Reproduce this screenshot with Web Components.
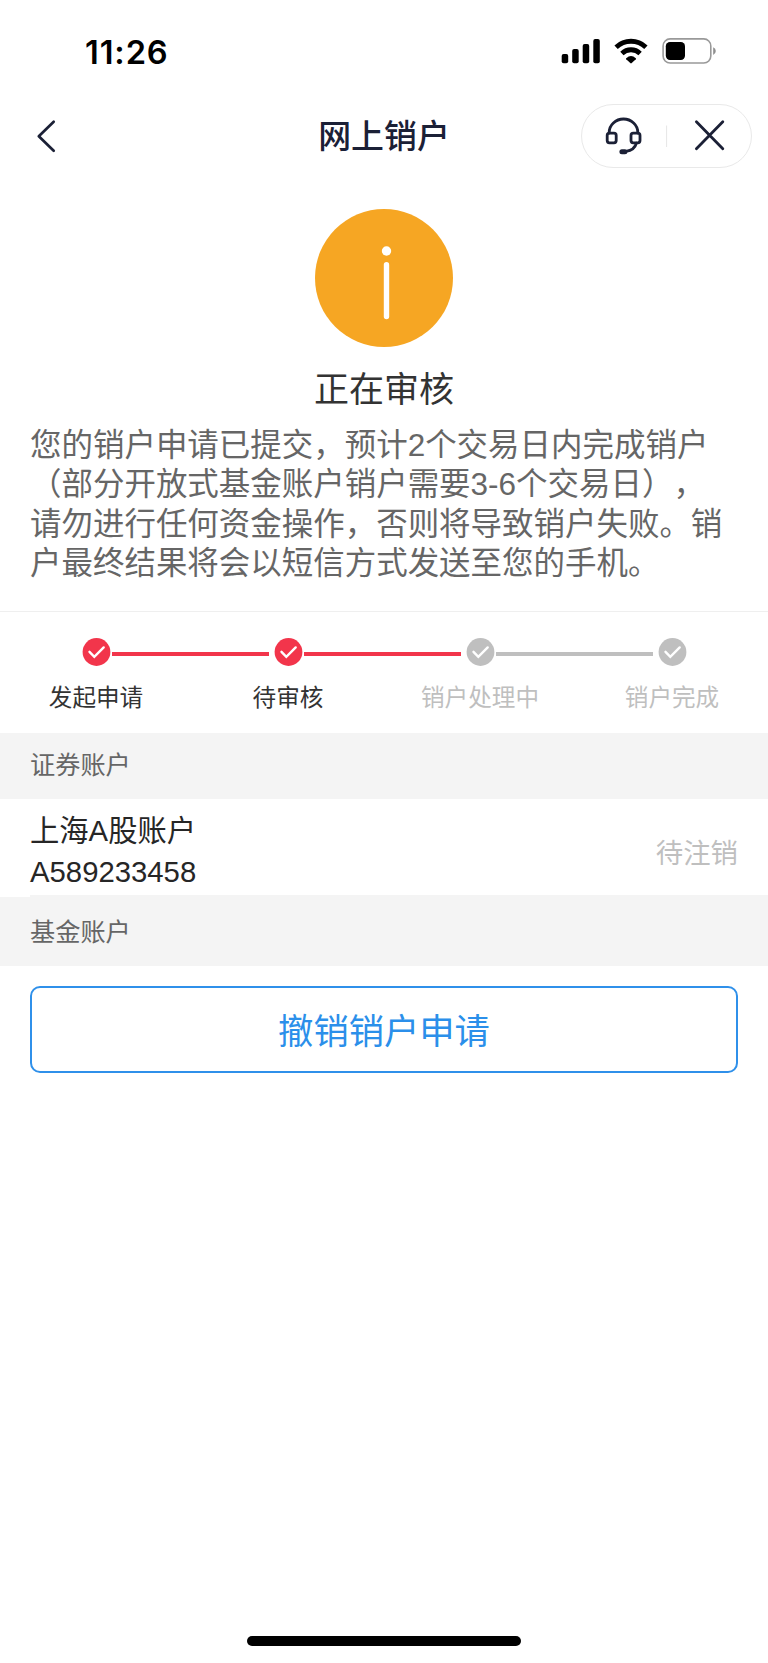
<!DOCTYPE html>
<html lang="zh-CN">
<head>
<meta charset="utf-8">
<title>网上销户</title>
<style>
html,body{margin:0;padding:0;background:#fff}
body{font-family:"Liberation Sans","Noto Sans CJK SC",sans-serif;color:#333;width:768px;height:1663px;overflow:hidden;text-spacing-trim:space-all}
</style>
</head>
<body>
<closing-page></closing-page>
<script>
const define=(name,html)=>customElements.define(name,class extends HTMLElement{
  constructor(){
    super();
    const t=document.createElement('template');
    t.innerHTML='<style>*{box-sizing:border-box}svg{display:block}</style>'+html;
    this.attachShadow({mode:'open'}).append(t.content.cloneNode(true));
  }
});

define('status-bar',`<style>
:host{box-sizing:border-box;display:flex;height:104px;padding:33px 52px 0 85px;justify-content:space-between;align-items:flex-start;color:#000}
.time{font:600 32.6px/38px Inter,sans-serif;letter-spacing:.9px}
svg{margin-top:3px}
</style>
<div class="time">11:26</div>
<svg width="156" height="30" viewBox="560 36 156 30">
<rect x="561.7" y="54" width="6.5" height="9.2" rx="1.9"/><rect x="572.2" y="49" width="6.5" height="14.2" rx="1.9"/><rect x="582.7" y="44" width="6.5" height="19.2" rx="1.9"/><rect x="593.3" y="39" width="6.5" height="24.2" rx="1.9"/>
<g fill="none" stroke="#000" stroke-width="4.8"><path d="M616.1 47.2a21.6 21.6 0 0 1 29.8 0"/><path d="M621.9 53.4a13.2 13.2 0 0 1 18.2 0"/></g>
<path d="M626.2 58.2q4.8-4.4 9.6 0q.5.6 0 1.1l-4.1 3.8q-.7.6-1.4 0l-4.1-3.8q-.5-.5 0-1.1z"/>
<rect x="663.1" y="38.9" width="47.7" height="24.1" rx="7" fill="none" stroke="#999" stroke-width="1.6"/><rect x="665.8" y="42" width="19.2" height="18" rx="4.2"/><path d="M713.2 47.3q2.6 1.1 2.6 3.8t-2.6 3.8z" fill="#8f8f8f"/>
</svg>`);

define('nav-bar',`<style>
:host{box-sizing:border-box;display:grid;grid-template-columns:171px 1fr 171px;height:64px;padding:0 16px;align-items:center;color:#1b2036}
.title{text-align:center;font:500 32.9px/62px "Liberation Sans","Noto Sans CJK SC",sans-serif;padding-top:2px}
.pill{height:63.5px;border:1px solid #e9e9e9;border-radius:32px}
</style>
<svg width="40" height="40" viewBox="16 116 40 40" fill="none" stroke="#1b2036" stroke-width="2.7" stroke-linecap="round" stroke-linejoin="round"><path d="M53.7 121.7L38.8 136.2L53.7 150.7"/></svg>
<div class="title"><slot></slot></div>
<div class="pill"><svg width="169" height="61" viewBox="582 105 169 61" fill="none" stroke="#1b2036" stroke-width="2.8" stroke-linecap="round">
<path d="M609.2 133v-.6a14.3 13.4 0 0 1 28.6 0v.6"/><rect x="607.2" y="133.2" width="9" height="9.6" rx="2.2"/><rect x="631" y="133.2" width="9" height="9.6" rx="2.2"/><path d="M636.4 143.2q-1.8 7-10.4 8.2"/><rect x="619.4" y="149.2" width="8" height="5" rx="2.5" fill="#1b2036" stroke="none"/>
<path d="M666.6 125.5v21.5" stroke="#e6e6e6" stroke-width="1" stroke-linecap="butt"/>
<path d="M696.4 121.8l26.4 27M722.8 121.8l-26.4 27"/></svg></div>`);

define('review-notice',`<style>
:host{box-sizing:border-box;display:block;height:444px;padding-top:41px;border-bottom:1px solid #efefef}
.info{margin:0 auto;width:138px}
h1{margin:24px 0 0;text-align:center;font-weight:400;font-size:35px;line-height:38px;color:#333}
p{margin:16.8px 0 0 30px;font-size:31.48px;line-height:39.4px;color:#666;white-space:nowrap}
</style>
<svg class="info" width="138" height="138" viewBox="0 0 138 138"><circle cx="69" cy="69" r="69" fill="#f6a623"/><circle cx="71.5" cy="42" r="4.7" fill="#fff"/><rect x="68.8" y="53" width="5.4" height="57.3" rx="2.7" fill="#fff"/></svg>
<h1><slot name="title"></slot></h1><p><slot></slot></p>`);

define('step-item',`<style>
:host{box-sizing:border-box;display:block;width:192px;height:121px;padding-top:26.4px;--c:#bfbfbf;--t:#bfbfbf}
:host([done]){--c:#f2354b;--t:#333}
.mark{display:grid;grid-template-columns:82px 28px 1fr;height:28px}
.mark svg{grid-column:2}
.line{height:4px;width:157px;margin:13.6px 0 0 2.3px;background:var(--c)}
:host([last]) .line{display:none}
.label{text-align:center;margin-top:16.6px;font-size:23.6px;line-height:30px;color:var(--t)}
</style>
<div class="mark"><svg width="29" height="28" viewBox="0 0 29 28"><circle cx="14.5" cy="14" r="13.9" fill="var(--c)"/><path d="M7.5 13.8l4.8 5L21.7 9.4" fill="none" stroke="#fff" stroke-width="2.4" stroke-linecap="round"/></svg><div class="line"></div></div>
<div class="label"><slot></slot></div>`);

define('step-list',`<style>:host{display:flex;height:121px}</style><slot></slot>`);

define('section-title',`<style>:host{box-sizing:border-box;display:block;padding-left:30px;background:#f4f4f4;color:#666;font-size:25.2px;line-height:var(--lh,64px);height:var(--h,66px)}</style><slot></slot>`);

define('account-row',`<style>
:host{box-sizing:border-box;display:flex;justify-content:space-between;align-items:center;height:98px;padding-right:30px;color:#262626}
.main{width:338px;padding:6px 0 0 30px;font-size:29.3px;line-height:41px}
.state{font-size:27.4px;line-height:40px;color:#bfbfbf;padding-top:12px}
</style>
<div class="main"><slot name="name"></slot><br><slot name="number"></slot></div><div class="state"><slot></slot></div>`);

define('row-divider',`<style>:host{display:block;height:2px;margin:-2px 0 0 30px;background:#f4f4f4}</style>`);

define('outline-button',`<style>
:host{display:block;margin:20px 30px 0}
button{display:block;width:708px;height:87px;padding:4px 0 0;border:2px solid #2f90ea;border-radius:10px;background:#fff;color:#2b8fea;font:400 35.3px/80px "Liberation Sans","Noto Sans CJK SC",sans-serif}
</style><button><slot></slot></button>`);

define('home-indicator',`<style>:host{display:block;margin:auto auto 17px;width:274px;height:10px;border-radius:5px;background:#000}</style>`);

define('closing-page',`<style>:host{display:flex;flex-direction:column;width:768px;height:1663px;background:#fff}</style>
<status-bar></status-bar>
<nav-bar>网上销户</nav-bar>
<review-notice><span slot="title">正在审核</span>您的销户申请已提交，预计2个交易日内完成销户<br>（部分开放式基金账户销户需要3-6个交易日），<br>请勿进行任何资金操作，否则将导致销户失败。销<br>户最终结果将会以短信方式发送至您的手机。</review-notice>
<step-list><step-item done>发起申请</step-item><step-item done>待审核</step-item><step-item>销户处理中</step-item><step-item last>销户完成</step-item></step-list>
<section-title>证券账户</section-title>
<account-row><span slot="name">上海A股账户</span><span slot="number">A589233458</span>待注销</account-row>
<row-divider></row-divider>
<section-title style="--h:69px;--lh:71px">基金账户</section-title>
<outline-button>撤销销户申请</outline-button>
<home-indicator></home-indicator>`);
</script>
</body>
</html>
